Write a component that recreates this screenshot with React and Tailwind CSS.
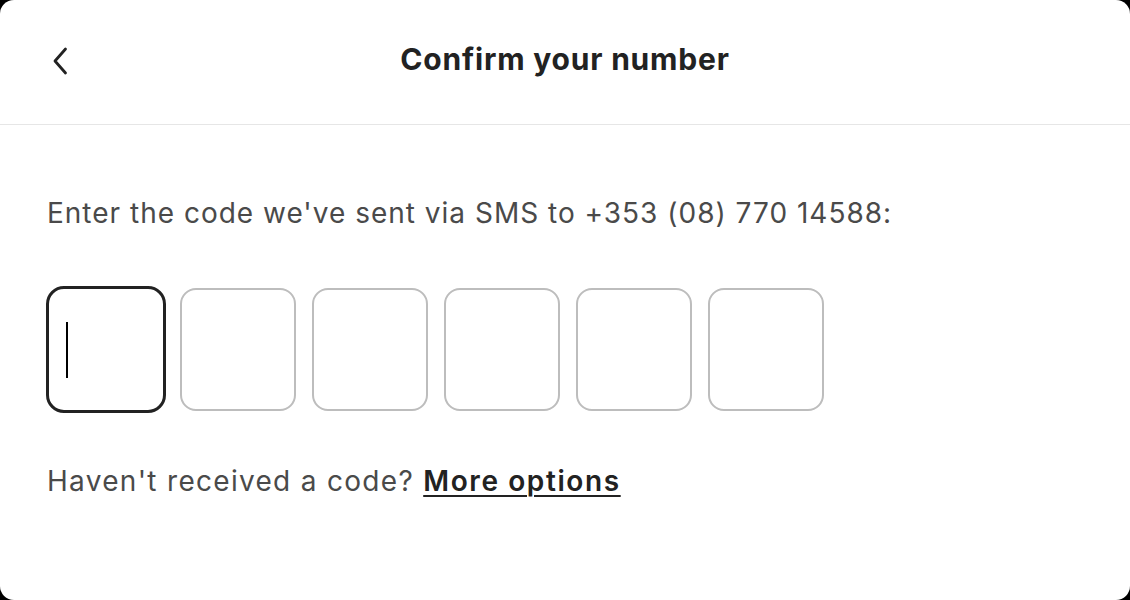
import React from 'react';

export default function App() {
  const boxes = [0, 1, 2, 3, 4, 5];

  return (
    <div className="w-[1130px] h-[600px] bg-black" style={{ fontFamily: 'Inter, "Noto Sans", sans-serif' }}>
      <div className="w-full h-full bg-white rounded-[14px] flex flex-col overflow-hidden">
        {/* Header */}
        <div className="h-[125px] border-b border-[#e6e6e6] flex items-center pb-[6px] relative shrink-0">
          <button className="absolute left-[46px] top-[43px] w-[28px] h-[36px] flex items-center justify-center">
            <svg width="16" height="28" viewBox="0 0 16 28" fill="none">
              <path d="M13.5 2 L3 14 L13.5 26" stroke="#222222" strokeWidth="2.8" strokeLinecap="round" strokeLinejoin="round" />
            </svg>
          </button>
          <h1 className="w-full text-center text-[30px] leading-[36px] font-bold text-[#222] tracking-[0.8px]">
            Confirm your number
          </h1>
        </div>

        {/* Body */}
        <div className="px-[47px] pt-[70px]">
          <p className="text-[28px] leading-[36px] text-[#4a4a4a] tracking-[1px]">
            Enter the code we've sent via SMS to +353 (08) 770 14588:
          </p>

          <div className="flex gap-[16px] mt-[57px] pl-[1px]">
            {boxes.map((b) =>
              b === 0 ? (
                <div key={b} className="w-[116px] h-[123px] rounded-[16px] outline-[3px] outline-[#222] outline -outline-offset-[1.5px] flex items-center">
                  <div className="ml-[18px] w-[2px] h-[56px] bg-black" />
                </div>
              ) : (
                <div key={b} className="w-[116px] h-[123px] rounded-[16px] border-2 border-[#bdbdbd]" />
              )
            )}
          </div>

          <p className="mt-[52px] text-[28px] leading-[36px] text-[#4a4a4a] tracking-[1.3px]">
            Haven't received a code?{' '}
            <a href="#" className="font-semibold text-[#222] tracking-[1.6px] underline underline-offset-[4px] decoration-[2px]">
              More options
            </a>
          </p>
        </div>
      </div>
    </div>
  );
}
